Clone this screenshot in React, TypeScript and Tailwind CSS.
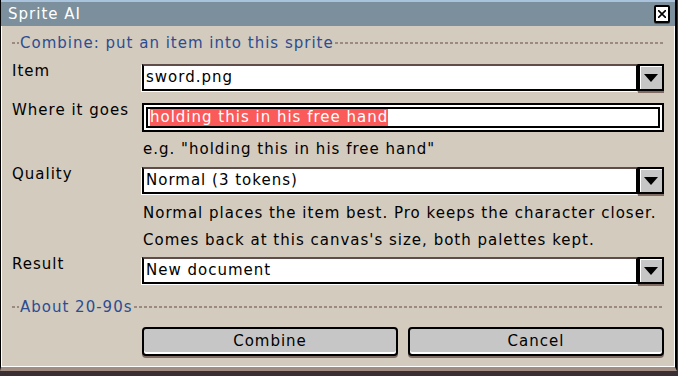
import type { ReactNode } from 'react';

const dash =
  'bg-[repeating-linear-gradient(to_right,#9c8a80_0_3px,transparent_3px_5px)]';

const Separator = ({ text }: { text: string }) => (
  <div className="flex h-[16px] items-center">
    <div className={`h-[2px] w-[7px] ${dash}`} />
    <span className="px-[1px] leading-[16px] text-[#2b4d92]">{text}</span>
    <div className={`h-[2px] flex-1 ${dash}`} />
  </div>
);

const Triangle = () => (
  <svg width="14" height="8" viewBox="0 0 14 8">
    <polygon points="0,0 14,0 7,8" fill="#000" />
  </svg>
);

const Combo = ({ value }: { value: string }) => (
  <div className="flex h-[27px]">
    <div className="flex flex-1 items-center border-2 border-black border-t-[#5e4d48] bg-white pl-[2px] shadow-[-1px_1px_0_#fff]">
      {value}
    </div>
    <div className="flex w-[26px] items-center justify-center border-2 border-black bg-[#c6c6c6] shadow-[inset_1px_1px_0_#fff,0_2px_0_#7e6c64]">
      <Triangle />
    </div>
  </div>
);

const Row = ({
  label,
  children,
  className,
}: {
  label: string;
  children: ReactNode;
  className?: string;
}) => (
  <div className={`grid grid-cols-[130px_1fr] ${className ?? ''}`}>
    <div className="-mt-[1px] leading-[16px]">{label}</div>
    <div>{children}</div>
  </div>
);

const Button = ({ children }: { children: ReactNode }) => (
  <button className="flex h-[29px] flex-1 items-center justify-center rounded-[4px] border-2 border-black bg-[#c6c6c6] shadow-[inset_0_-2px_0_#fff,0_2px_0_#7e6c64]">
    {children}
  </button>
);

export default function App() {
  return (
    <div className="h-[376px] w-[678px] bg-[#3a3034] font-['DejaVu_Sans',sans-serif] text-[15px] tracking-[1px] text-black">
      <div className="flex h-[371px] w-[677px] flex-col border-b-4 border-l border-r-2 border-b-[#a08e84] border-l-black border-r-black bg-[#d3cbbe] shadow-[inset_1px_0_0_#fff,inset_-1px_0_0_#fff,inset_0_-1px_0_#fff]">
        {/* title bar */}
        <div className="flex h-[26px] items-center border-t-2 border-[#a9c3dc] bg-[#7b8f9c] pl-[7px] pr-[5px] text-white">
          <span className="flex-1">Sprite AI</span>
          <div className="flex h-[18px] w-[16px] items-center justify-center rounded-[2px] border-2 border-black bg-white shadow-[0_1px_0_#5e4d48]">
            <svg width="8" height="8" viewBox="0 0 8 8">
              <path d="M0 0 L8 8 M8 0 L0 8" stroke="#000" strokeWidth="1.6" />
            </svg>
          </div>
        </div>

        <div className="flex flex-1 flex-col pl-[11px] pr-[11px] pt-[9px]">
          <Separator text="Combine: put an item into this sprite" />

          <Row label="Item" className="mt-[13px]">
            <Combo value="sword.png" />
          </Row>

          <Row label="Where it goes" className="mt-[12px]">
            <div className="h-[29px] border-2 border-black bg-white p-[2px]">
              <div className="flex h-full items-center border-2 border-black bg-white pl-[2px]">
                <span className="bg-[#fa5a5a] leading-[17px] text-white">
                  holding this in his free hand
                </span>
              </div>
            </div>
            <div className="mt-[9px] pl-[1px] leading-[16px]">
              e.g. "holding this in his free hand"
            </div>
          </Row>

          <Row label="Quality" className="mt-[10px]">
            <Combo value="Normal (3 tokens)" />
            <div className="mt-[6px] pl-[1px] leading-[27px]">
              <div>Normal places the item best. Pro keeps the character closer.</div>
              <div>Comes back at this canvas's size, both palettes kept.</div>
            </div>
          </Row>

          <Row label="Result" className="mt-[3px]">
            <Combo value="New document" />
          </Row>

          <div className="mt-[15px]">
            <Separator text="About 20-90s" />
          </div>

          <div className="ml-[130px] mt-[12px] flex gap-[10px]">
            <Button>Combine</Button>
            <Button>Cancel</Button>
          </div>
        </div>
      </div>
    </div>
  );
}
